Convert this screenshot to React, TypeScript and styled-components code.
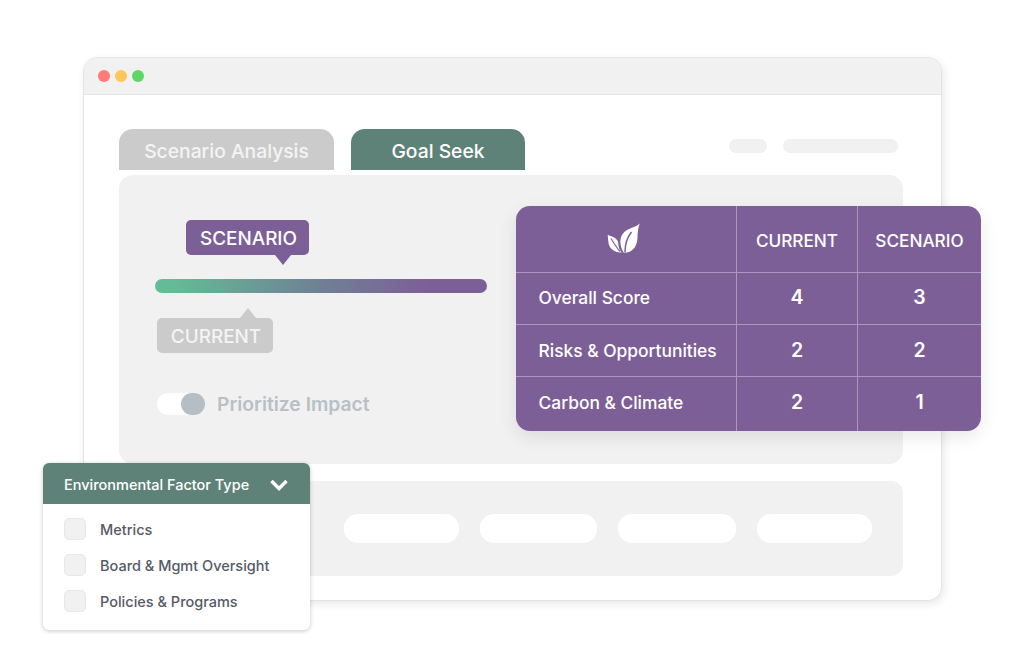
import styled, { createGlobalStyle } from 'styled-components';

const GlobalStyle = createGlobalStyle`
  html, body {
    margin: 0;
    padding: 0;
    background: #fff;
  }
  body {
    font-family: Inter, "Liberation Sans", sans-serif;
  }
`;

const rows = [
  { label: 'Overall Score', current: 4, scenario: 3, height: 52, nudge: 0 },
  { label: 'Risks & Opportunities', current: 2, scenario: 2, height: 52, nudge: 2 },
  { label: 'Carbon & Climate', current: 2, scenario: 1, height: 55, nudge: 0 },
];

const filters = ['Metrics', 'Board & Mgmt Oversight', 'Policies & Programs'];
const pillWidths = [115, 117, 118, 115];

const LeafIcon = () => (
  <svg width="34" height="30" viewBox="0 0 34 30" fill="#fff">
    <path d="M32.8 0.6C29 4.5 20.5 5 16 10.5C12.5 15 12.3 22 16.5 29.4C19 29.6 21.5 29.4 24 28C29.5 24.5 30.5 18.5 30.6 12C30.7 8 31.5 4 32.8 0.6Z" />
    <path d="M0.7 12C4.5 13.2 8.5 14.5 10.5 17.5C11.5 19.5 11.3 23 12.2 25.5C12.8 27 13.6 28.2 14.6 29.4C9 29.8 4 27 2.2 22.5C1 19 1.2 15.5 0.7 12Z" />
    <path d="M4 15.5C6.5 19.5 9.5 24.5 13 28.5" stroke="#7d5f97" strokeWidth="1.2" fill="none" />
    <path d="M24.5 9C20.5 14 18 21 18 29" stroke="#7d5f97" strokeWidth="1.5" fill="none" />
  </svg>
);

const App = () => (
  <Canvas>
    <GlobalStyle />
    <Window>
      <TitleBar>
        <Dot $color="#ff7b75" />
        <Dot $color="#ffc65c" />
        <Dot $color="#5fd663" />
      </TitleBar>
      <Body>
        <TabRow>
          <Tab $width={215} $bg="#cbcbcb" $fg="#f4f4f4">
            Scenario Analysis
          </Tab>
          <Tab $width={174} $bg="#5e8278" $fg="#fff">
            Goal Seek
          </Tab>
          <TopPills>
            <GreyPill $width={38} />
            <GreyPill $width={115} />
          </TopPills>
        </TabRow>
        <MainPanel>
          <SliderArea>
            <ScenarioTag>SCENARIO</ScenarioTag>
            <Track />
            <CurrentTag>CURRENT</CurrentTag>
            <ToggleRow>
              <Toggle>
                <Knob />
              </Toggle>
              <ToggleLabel>Prioritize Impact</ToggleLabel>
            </ToggleRow>
          </SliderArea>
        </MainPanel>
        <BottomPanel>
          {pillWidths.map((width, i) => (
            <WhitePill key={i} $width={width} />
          ))}
        </BottomPanel>
      </Body>
    </Window>

    <ScoreTable>
      <HeaderRow>
        <IconCell>
          <LeafIcon />
        </IconCell>
        <HeadCell>CURRENT</HeadCell>
        <HeadCell>SCENARIO</HeadCell>
      </HeaderRow>
      {rows.map((row) => (
        <Row key={row.label} $height={row.height}>
          <LabelCell $nudge={row.nudge}>{row.label}</LabelCell>
          <ValueCell $nudge={row.nudge}>{row.current}</ValueCell>
          <ValueCell $nudge={row.nudge}>{row.scenario}</ValueCell>
        </Row>
      ))}
    </ScoreTable>

    <FilterCard>
      <FilterHeader>
        <span>Environmental Factor Type</span>
        <svg width="20" height="14" viewBox="0 0 20 14" fill="none">
          <path d="M2.5 3L10 10.5L17.5 3" stroke="#fff" strokeWidth="3.4" />
        </svg>
      </FilterHeader>
      <FilterList>
        {filters.map((filter) => (
          <FilterItem key={filter}>
            <Checkbox />
            {filter}
          </FilterItem>
        ))}
      </FilterList>
    </FilterCard>
  </Canvas>
);

export default App;

const Canvas = styled.div`
  position: relative;
  width: 1024px;
  height: 657px;
  padding: 57px 0 0 83px;
  box-sizing: border-box;
  overflow: hidden;
  background: #fff;
`;

const Window = styled.div`
  width: 859px;
  height: 544px;
  box-sizing: border-box;
  border: 1px solid #e4e4e4;
  border-radius: 14px;
  background: #fff;
  box-shadow: 2px 3px 8px rgba(0, 0, 0, 0.09);
  overflow: hidden;
`;

const TitleBar = styled.div`
  display: flex;
  align-items: center;
  gap: 5px;
  height: 36px;
  padding-left: 14px;
  background: #f1f1f1;
  border-bottom: 1px solid #e6e6e6;
`;

const Dot = styled.div<{ $color: string }>`
  width: 12px;
  height: 12px;
  border-radius: 50%;
  background: ${(props) => props.$color};
`;

const Body = styled.div`
  padding: 34px 38px 0 35px;
`;

const TabRow = styled.div`
  display: flex;
  align-items: flex-start;
  gap: 17px;
  height: 41px;
`;

const Tab = styled.div<{ $width: number; $bg: string; $fg: string }>`
  display: flex;
  align-items: center;
  justify-content: center;
  width: ${(props) => props.$width}px;
  height: 41px;
  padding-top: 3px;
  box-sizing: border-box;
  border-radius: 14px 14px 0 0;
  background: ${(props) => props.$bg};
  color: ${(props) => props.$fg};
  font-size: 19.3px;
  font-weight: 500;
`;

const TopPills = styled.div`
  display: flex;
  gap: 16px;
  margin: 10px 5px 0 auto;
`;

const GreyPill = styled.div<{ $width: number }>`
  width: ${(props) => props.$width}px;
  height: 14px;
  border-radius: 7px;
  background: #f1f1f1;
`;

const MainPanel = styled.div`
  height: 289px;
  margin-top: 5px;
  padding: 45px 0 0 36px;
  box-sizing: border-box;
  border-radius: 14px;
  background: #f1f1f1;
`;

const SliderArea = styled.div`
  display: flex;
  flex-direction: column;
  align-items: flex-start;
  width: 332px;
`;

const Tag = styled.div`
  position: relative;
  display: flex;
  align-items: center;
  justify-content: center;
  height: 35px;
  padding: 1px 0 0 2px;
  box-sizing: border-box;
  border-radius: 5px;
  font-size: 18.9px;
  font-weight: 500;
  &::after {
    content: '';
    position: absolute;
    width: 0;
    height: 0;
    border-left: 8px solid transparent;
    border-right: 8px solid transparent;
  }
`;

const ScenarioTag = styled(Tag)`
  width: 123px;
  margin-left: 31px;
  background: #7d5f97;
  color: #fff;
  &::after {
    top: 100%;
    left: 89px;
    border-top: 10px solid #7d5f97;
  }
`;

const CurrentTag = styled(Tag)`
  width: 116px;
  margin: 25px 0 0 2px;
  background: #cbcbcb;
  color: #f4f4f4;
  &::after {
    bottom: 100%;
    left: 83px;
    border-bottom: 10px solid #cbcbcb;
  }
`;

const Track = styled.div`
  width: 332px;
  height: 14px;
  margin-top: 24px;
  border-radius: 7px;
  background: linear-gradient(100deg, #64bc96 0%, #64bc96 5%, #6f8094 50%, #7d5f97 82%, #7d5f97 100%);
`;

const ToggleRow = styled.div`
  display: flex;
  align-items: center;
  gap: 12px;
  margin: 39px 0 0 2px;
`;

const Toggle = styled.div`
  position: relative;
  width: 48px;
  height: 22px;
  border-radius: 11px;
  background: #fff;
`;

const Knob = styled.div`
  position: absolute;
  top: 0;
  right: 0;
  width: 24px;
  height: 22px;
  border-radius: 11px;
  background: #b5bec5;
`;

const ToggleLabel = styled.span`
  color: #b8c0c7;
  font-size: 19.3px;
  font-weight: 600;
`;

const BottomPanel = styled.div`
  display: flex;
  align-items: center;
  justify-content: flex-end;
  gap: 21px;
  height: 95px;
  margin-top: 17px;
  padding-right: 31px;
  box-sizing: border-box;
  border-radius: 12px;
  background: #f1f1f1;
`;

const WhitePill = styled.div<{ $width: number }>`
  width: ${(props) => props.$width}px;
  height: 29px;
  border-radius: 14px;
  background: #fff;
`;

const ScoreTable = styled.div`
  position: absolute;
  top: 206px;
  left: 516px;
  width: 465px;
  height: 225px;
  border-radius: 14px;
  background: #7d5f97;
  box-shadow: 0 6px 18px rgba(0, 0, 0, 0.09);
  overflow: hidden;
  color: #fff;
`;

const Row = styled.div<{ $height: number }>`
  display: grid;
  grid-template-columns: 220px 121px 124px;
  height: ${(props) => props.$height}px;
  box-sizing: border-box;
  border-top: 1px solid #ab98bd;
`;

const HeaderRow = styled(Row).attrs({ $height: 66 })`
  border-top: none;
`;

const Cell = styled.div`
  display: flex;
  align-items: center;
  justify-content: center;
  &:not(:first-child) {
    box-sizing: border-box;
    border-left: 1px solid #ab98bd;
  }
`;

const IconCell = styled(Cell)`
  padding-right: 4px;
  padding-bottom: 2px;
`;

const HeadCell = styled(Cell)`
  padding-top: 2px;
  font-size: 17.2px;
  font-weight: 500;
`;

const LabelCell = styled(Cell)<{ $nudge: number }>`
  justify-content: flex-start;
  padding: ${(props) => props.$nudge}px 0 3px 22.5px;
  font-size: 17.4px;
  font-weight: 500;
`;

const ValueCell = styled(Cell)<{ $nudge: number }>`
  padding: ${(props) => props.$nudge}px 0 4px;
  font-size: 19.5px;
  font-weight: 600;
`;

const FilterCard = styled.div`
  position: absolute;
  top: 463px;
  left: 43px;
  width: 267px;
  height: 167px;
  border-radius: 6px;
  background: #fff;
  box-shadow: 0 1px 4px rgba(0, 0, 0, 0.22);
  overflow: hidden;
`;

const FilterHeader = styled.div`
  display: flex;
  align-items: center;
  justify-content: space-between;
  height: 41px;
  padding: 2px 21px 0;
  box-sizing: border-box;
  background: #5e8278;
  color: #fff;
  font-size: 14.5px;
  font-weight: 500;
`;

const FilterList = styled.div`
  display: flex;
  flex-direction: column;
  gap: 14px;
  padding: 14px 0 0 21px;
`;

const FilterItem = styled.div`
  display: flex;
  align-items: center;
  gap: 14px;
  height: 22px;
  color: #555a66;
  font-size: 14.5px;
  font-weight: 500;
`;

const Checkbox = styled.div`
  width: 22px;
  height: 22px;
  box-sizing: border-box;
  border: 1px solid #e8e8e8;
  border-radius: 5px;
  background: #f1f1f1;
`;
